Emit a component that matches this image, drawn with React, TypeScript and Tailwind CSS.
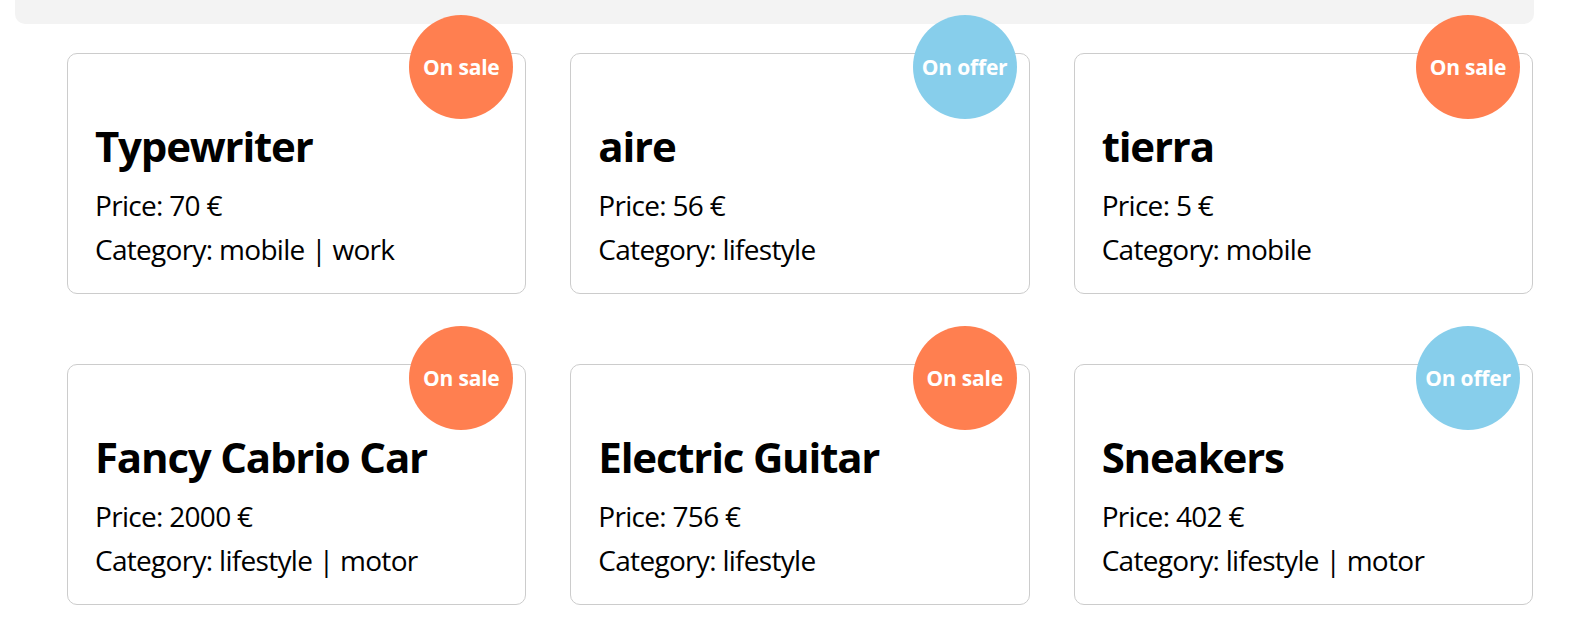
import React from "react";

type Item = {
  name: string;
  price: string;
  category: string;
  badge: "sale" | "offer";
};

const items: Item[] = [
  { name: "Typewriter", price: "70", category: "mobile | work", badge: "sale" },
  { name: "aire", price: "56", category: "lifestyle", badge: "offer" },
  { name: "tierra", price: "5", category: "mobile", badge: "sale" },
  { name: "Fancy Cabrio Car", price: "2000", category: "lifestyle | motor", badge: "sale" },
  { name: "Electric Guitar", price: "756", category: "lifestyle", badge: "sale" },
  { name: "Sneakers", price: "402", category: "lifestyle | motor", badge: "offer" },
];

function Card({ item }: { item: Item }) {
  return (
    <div className="relative h-[241px] rounded-[10px] border border-[#cccccc] bg-white pl-[27px] pt-[67px] text-black">
      <div
        className={
          "absolute -top-[39px] right-[12px] flex h-[104px] w-[104px] items-center justify-center rounded-full pt-[2px] text-[21px] font-bold tracking-[-0.2px] text-white " +
          (item.badge === "sale" ? "bg-[#ff7f50]" : "bg-[#87ceeb]")
        }
      >
        {item.badge === "sale" ? "On sale" : "On offer"}
      </div>
      <h2 className="text-[42px] font-bold leading-[50px] tracking-[-1.2px]">{item.name}</h2>
      <p className="mt-[12px] text-[28px] leading-[44px] tracking-[-0.7px]">Price: {item.price} €</p>
      <p className="text-[28px] leading-[44px] tracking-[-0.7px]">Category: {item.category}</p>
    </div>
  );
}

export default function App() {
  return (
    <div className="min-h-[627px] w-full bg-white font-['Open_Sans',sans-serif]">
      <div className="ml-[15px] w-[1519px]">
        <div className="h-[24px] rounded-b-[10px] bg-[#f3f3f3]" />
        <div className="ml-[52px] mr-[1px] mt-[29px] grid grid-cols-3 gap-x-[44px] gap-y-[70px]">
          {items.map((it) => (
            <Card key={it.name} item={it} />
          ))}
        </div>
      </div>
    </div>
  );
}
